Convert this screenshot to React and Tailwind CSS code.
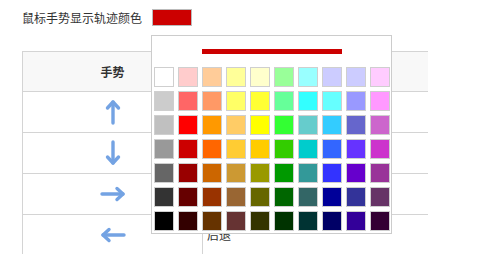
import React from "react";

const PALETTE = [
  ["#FFFFFF","#FFCCCC","#FFCC99","#FFFF99","#FFFFCC","#99FF99","#99FFFF","#CCCCFF","#CCCCFF","#FFCCFF"],
  ["#CCCCCC","#FF6666","#FF9966","#FFFF66","#FFFF33","#66FF99","#33FFFF","#66FFFF","#9999FF","#FF99FF"],
  ["#C0C0C0","#FF0000","#FF9900","#FFCC66","#FFFF00","#33FF33","#66CCCC","#33CCFF","#6666CC","#CC66CC"],
  ["#999999","#CC0000","#FF6600","#FFCC33","#FFCC00","#33CC00","#00CCCC","#3366FF","#6633FF","#CC33CC"],
  ["#666666","#990000","#CC6600","#CC9933","#999900","#009900","#339999","#3333FF","#6600CC","#993399"],
  ["#333333","#660000","#993300","#996633","#666600","#006600","#336666","#000099","#333399","#663366"],
  ["#000000","#330000","#663300","#663333","#333300","#003300","#003333","#000066","#330099","#330033"],
];

const ARROW = "#74a3e3";

function Arrow({ dir }) {
  const rot = { up: 0, right: 90, down: 180, left: 270 }[dir];
  return (
    <svg width="26" height="26" viewBox="0 0 26 26" style={{ transform: `rotate(${rot}deg)` }}>
      <g fill="none" stroke={ARROW} strokeWidth="3.4" strokeLinecap="round" strokeLinejoin="round">
        <line x1="13" y1="3" x2="13" y2="24" />
        <polyline points="7.5,9 13,3 18.5,9" />
      </g>
    </svg>
  );
}

const rows = [
  { dir: "up", label: "向上" },
  { dir: "down", label: "向下" },
  { dir: "right", label: "前进" },
  { dir: "left", label: "后退" },
];

export default function App() {
  return (
    <div
      className="relative w-[501px] h-[254px] overflow-hidden bg-white pl-[22px] pt-[9px] text-[12px] text-[#333]"
      style={{ fontFamily: '"Microsoft YaHei","Noto Sans CJK SC",sans-serif' }}
    >
      <div className="flex items-center h-[17px]">
        <span className="leading-none">鼠标手势显示轨迹颜色</span>
        <div className="ml-[10px] w-[40px] h-[17px] border border-[#bbb] bg-[#cc0000]" />
      </div>

      <div className="mt-[25px] w-[406px] border-t border-[#d4d4d4]">
        <div className="flex h-[40px] bg-[#f8f8f8] border-b border-[#d4d4d4]">
          <div className="w-[180px] border-l border-[#d4d4d4] flex items-center justify-center font-bold">手势</div>
          <div className="flex-1 border-l border-[#d4d4d4] flex items-center justify-center font-bold">操作</div>
        </div>
        {rows.map((r) => (
          <div key={r.dir} className="flex h-[41px] border-b border-[#d4d4d4]">
            <div className="w-[180px] border-l border-[#d4d4d4] flex items-center justify-center">
              <Arrow dir={r.dir} />
            </div>
            <div className="flex-1 border-l border-[#d4d4d4] flex items-center pl-[4px] pb-[1px]">{r.label}</div>
          </div>
        ))}
      </div>

      <div className="absolute left-[151px] top-[35px] w-[241px] h-[199px] bg-white border border-[#cccccc]">
        <div className="flex justify-center pt-[13px]">
          <div className="w-[140px] h-[5px] bg-[#cc0000]" />
        </div>
        <div className="mt-[13px] ml-[2px] grid grid-cols-[repeat(10,20px)] gap-[4px]">
          {PALETTE.flat().map((c, i) => (
            <div key={i} className="w-[20px] h-[20px] border border-[#cfcfcf]" style={{ backgroundColor: c }} />
          ))}
        </div>
      </div>
    </div>
  );
}
